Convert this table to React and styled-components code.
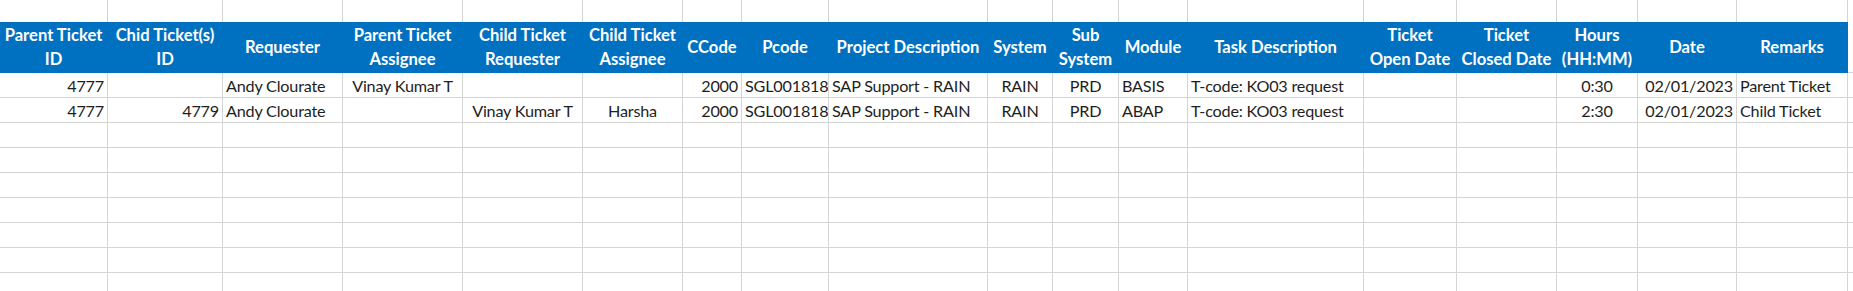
import styled, { createGlobalStyle } from 'styled-components';

const GlobalStyle = createGlobalStyle`
  html, body {
    margin: 0;
    padding: 0;
    background: #fff;
    overflow: hidden;
  }
`;

const COLS = [108, 115, 120, 120, 120, 100, 59, 87, 159, 65, 66, 69, 176, 93, 100, 81, 99, 111, 120];

const Sheet = styled.div`
  width: 1853px;
  height: 291px;
  overflow: hidden;
  font-family: Lato, "Open Sans", sans-serif;
  color: #1e1e1e;
`;

const Row = styled.div`
  display: grid;
  grid-template-columns: ${COLS.map((w) => `${w}px`).join(' ')};
  height: ${(p) => p.$h}px;
`;

const Cell = styled.div`
  box-sizing: border-box;
  border-right: 1px solid #d4d4d4;
  border-bottom: ${(p) => (p.$noBottom ? 'none' : '1px solid #d4d4d4')};
  padding: 0 3px 0 3px;
  font-size: 16.2px;
  letter-spacing: -0.2px;
  line-height: 25px;
  white-space: nowrap;
  overflow: hidden;
  text-align: ${(p) => p.$align || 'left'};
`;

const HeadCell = styled.div`
  box-sizing: border-box;
  background: ${(p) => (p.$blank ? '#fff' : '#0070c0')};
  border-right: 1px solid ${(p) => (p.$blank ? '#d4d4d4' : '#0070c0')};
  border-bottom: 1px solid ${(p) => (p.$blank ? '#d4d4d4' : '#0070c0')};
  color: #fff;
  font-weight: 700;
  font-size: 16.6px;
  line-height: 24px;
  display: flex;
  flex-direction: column;
  align-items: center;
  justify-content: center;
  text-align: center;
  white-space: nowrap;
`;

const headers = [
  ['Parent Ticket', 'ID'],
  ['Chid Ticket(s)', 'ID'],
  ['Requester'],
  ['Parent Ticket', 'Assignee'],
  ['Child Ticket', 'Requester'],
  ['Child Ticket', 'Assignee'],
  ['CCode'],
  ['Pcode'],
  ['Project Description'],
  ['System'],
  ['Sub', 'System'],
  ['Module'],
  ['Task Description'],
  ['Ticket', 'Open Date'],
  ['Ticket', 'Closed Date'],
  ['Hours', '(HH:MM)'],
  ['Date'],
  ['Remarks'],
];

const aligns = ['right', 'right', 'left', 'center', 'center', 'center', 'right', 'left', 'left',
  'center', 'center', 'left', 'left', 'left', 'left', 'center', 'right', 'left', 'left'];

const data = [
  ['4777', '', 'Andy Clourate', 'Vinay Kumar T', '', '', '2000', 'SGL001818', 'SAP Support - RAIN',
    'RAIN', 'PRD', 'BASIS', 'T-code: KO03 request', '', '', '0:30', '02/01/2023', 'Parent Ticket', ''],
  ['4777', '4779', 'Andy Clourate', '', 'Vinay Kumar T', 'Harsha', '2000', 'SGL001818', 'SAP Support - RAIN',
    'RAIN', 'PRD', 'ABAP', 'T-code: KO03 request', '', '', '2:30', '02/01/2023', 'Child Ticket', ''],
];

const emptyRows = 7;

export default function App() {
  return (
    <Sheet>
      <GlobalStyle />
      <Row $h={22}>
        {COLS.map((_, i) => (
          <Cell key={i} $noBottom />
        ))}
      </Row>
      <Row $h={51}>
        {headers.map((lines, i) => (
          <HeadCell key={i}>
            {lines.map((l) => (
              <span key={l}>{l}</span>
            ))}
          </HeadCell>
        ))}
        <HeadCell $blank />
      </Row>
      {data.map((r, ri) => (
        <Row key={ri} $h={25}>
          {r.map((v, ci) => (
            <Cell key={ci} $align={aligns[ci]}>{v}</Cell>
          ))}
        </Row>
      ))}
      {Array.from({ length: emptyRows }).map((_, ri) => (
        <Row key={`e${ri}`} $h={25}>
          {COLS.map((_, ci) => (
            <Cell key={ci} />
          ))}
        </Row>
      ))}
    </Sheet>
  );
}
